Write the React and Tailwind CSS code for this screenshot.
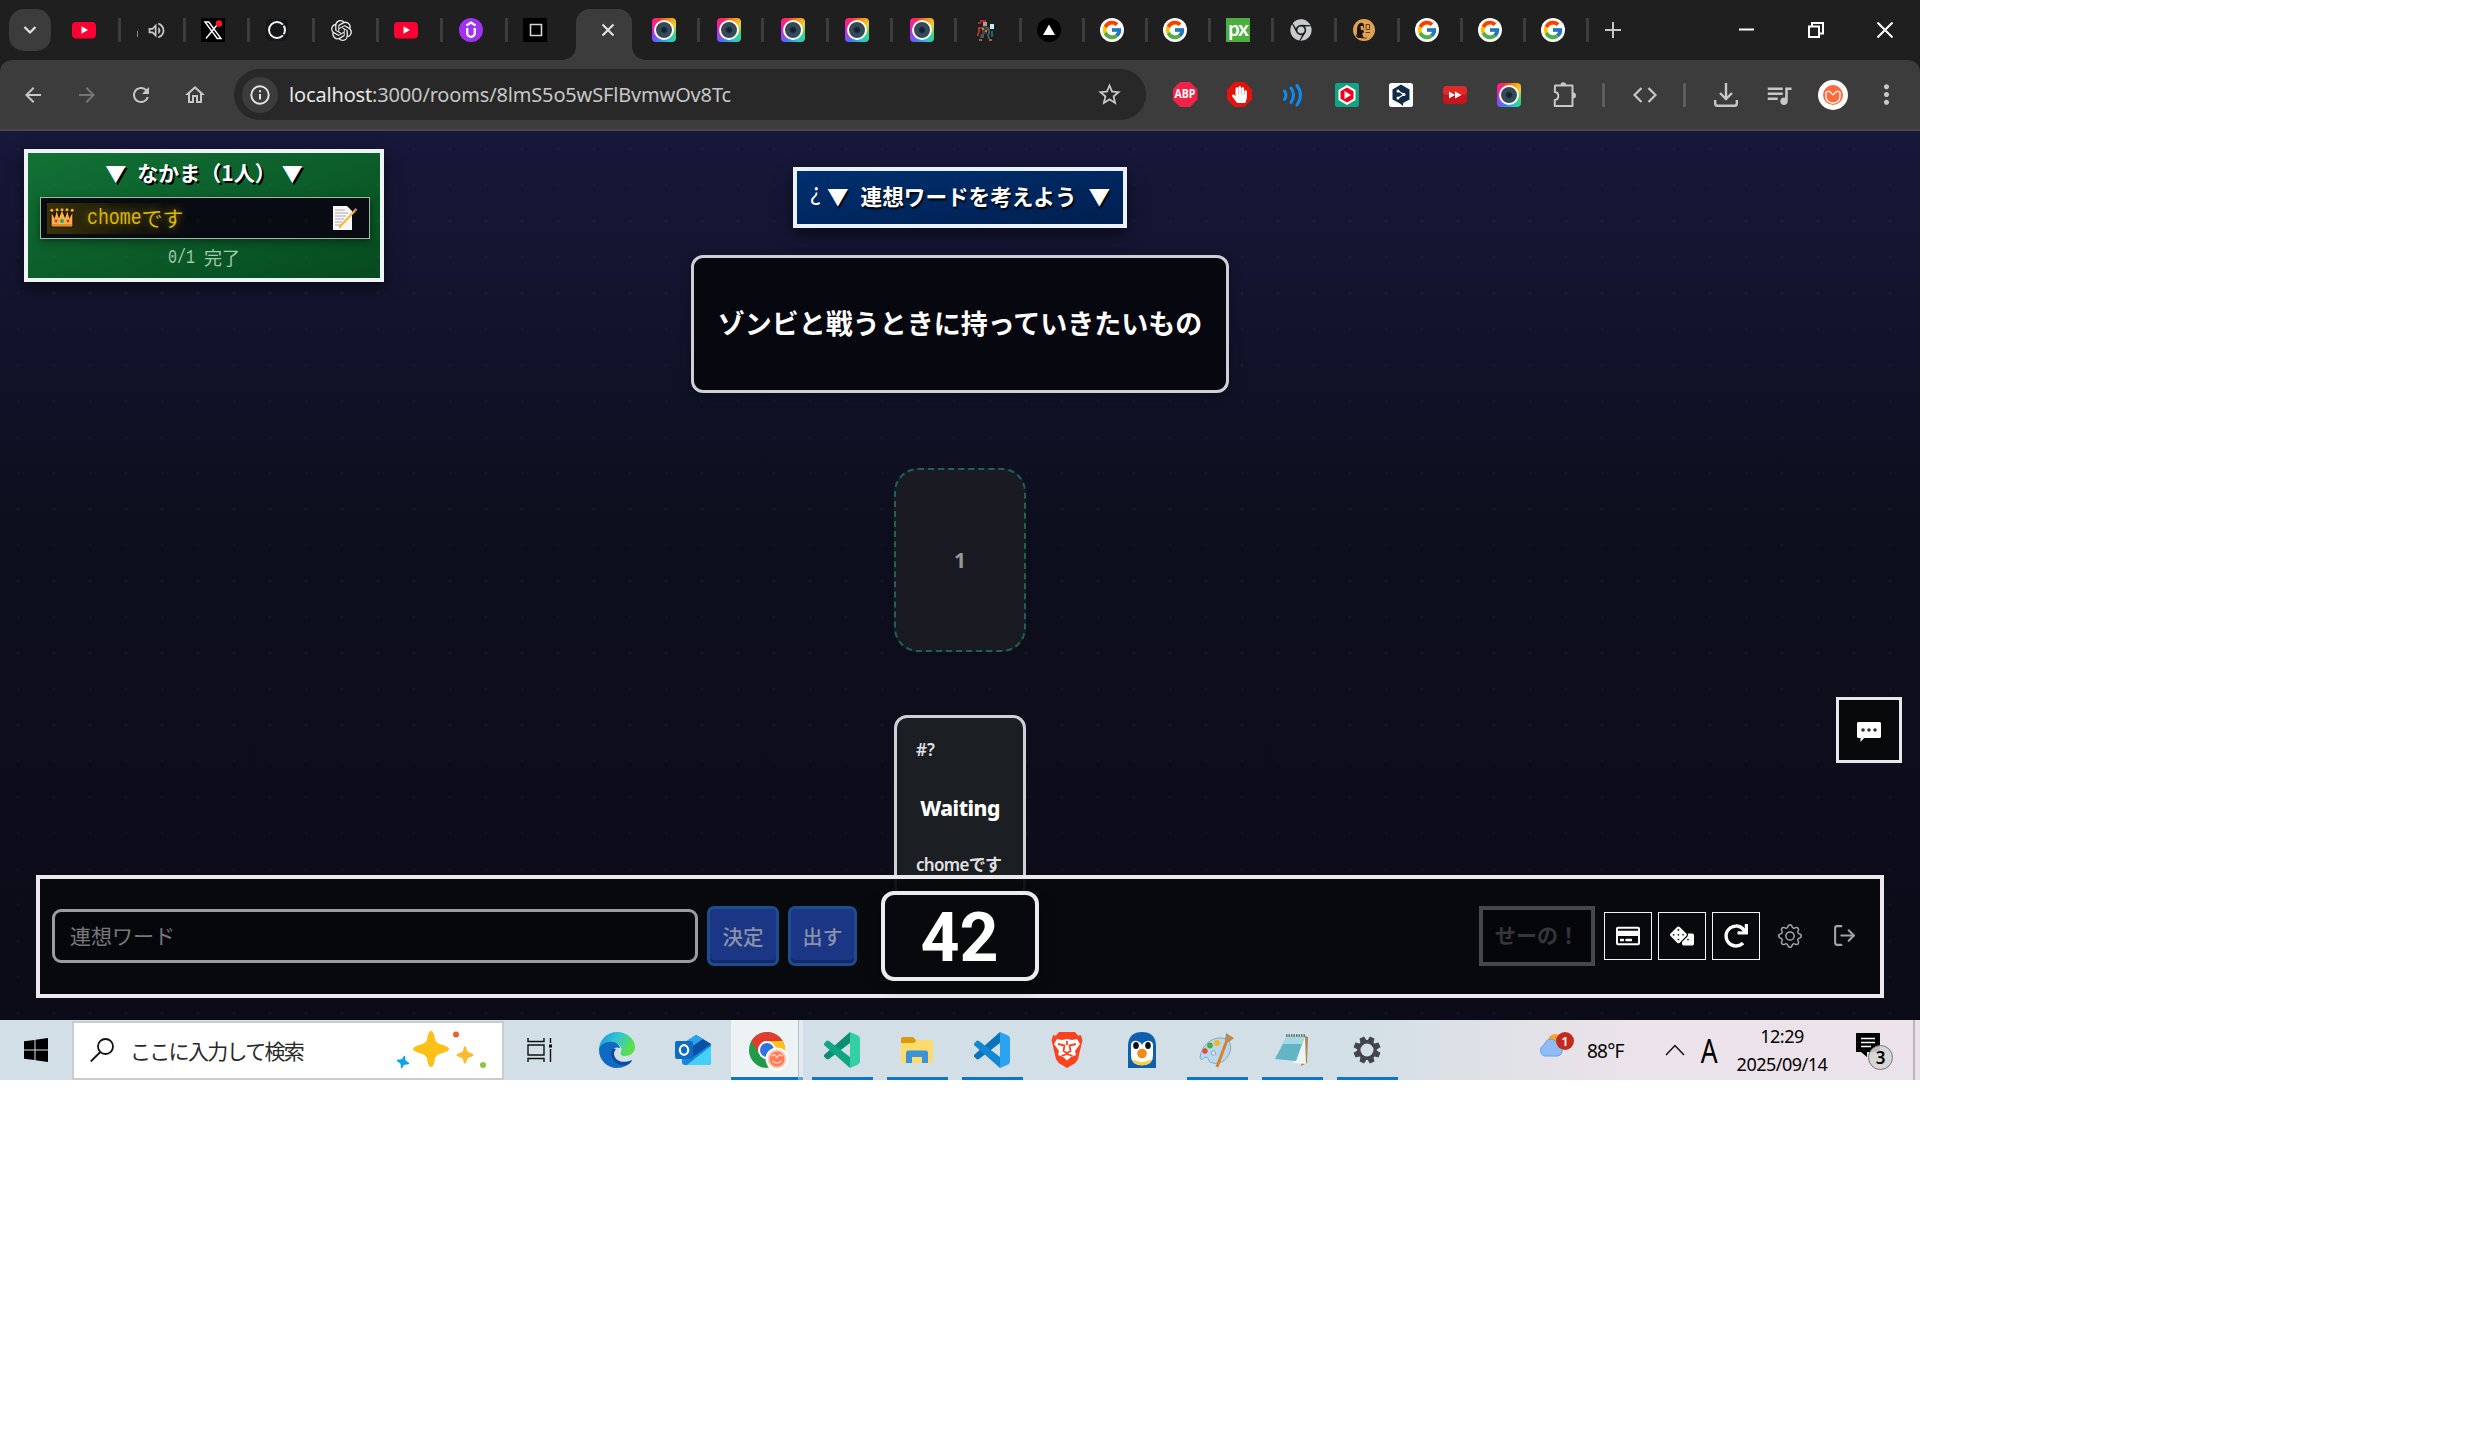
import React from "react";
import { FcGoogle } from "react-icons/fc";
import { SiOpenai } from "react-icons/si";
import { FaRedo, FaDice, FaRegCreditCard, FaHandPaper, FaChrome } from "react-icons/fa";
import { FiLogOut } from "react-icons/fi";
import { BsGear } from "react-icons/bs";
import {
  MdArrowBack,
  MdArrowForward,
  MdRefresh,
  MdOutlineHome,
  MdStarBorder,
  MdQueueMusic,
  MdMoreVert,
  MdOutlineVolumeUp,
} from "react-icons/md";

const YouTube = () => (
  <svg viewBox="0 0 24 24" className="size-6">
    <rect y="4" width="24" height="16.500" rx="4" fill="#ff0033" />
    <path d="M9.500 8.200v7.600l6.500-3.800z" fill="#fff" />
  </svg>
);
const XIcon = () => (
  <svg viewBox="0 0 24 24" className="size-6">
    <path d="M0 0h24v24H0z" fill="#000" />
    <path d="M4 4h3.800L20 20.500h-3.800zM18 4.500 5 20.500" fill="none" stroke="#fff" strokeWidth="1.400" />
    <circle cx="18" cy="5.500" r="3.200" fill="#ff1a1a" />
  </svg>
);
const Ring = () => (
  <svg viewBox="0 0 24 24" className="size-6">
    <rect x="1" y="1" width="22" height="22" rx="5" fill="#151718" />
    <circle cx="12" cy="12" r="8" fill="none" stroke="#f4f4f4" strokeWidth="2" />
    <path d="m16.500 8.500 4-3M16.500 15.500l4 3" stroke="#151718" strokeWidth="1.300" />
  </svg>
);
const Udemy = () => (
  <svg viewBox="0 0 24 24" className="size-6">
    <circle cx="12" cy="12" r="12" fill="#a033f0" />
    <path d="M7.500 7.500 12 4.600l4.500 2.900M8.200 10v5a3.800 3.800 0 0 0 7.600 0v-5" fill="none" stroke="#fff" strokeWidth="2.300" />
  </svg>
);
const Square = () => (
  <svg viewBox="0 0 24 24" className="size-6">
    <path d="M0 0h24v24H0z" fill="#000" />
    <path d="M7.500 6.500h11v11h-11z" fill="none" stroke="#d4d4d4" strokeWidth="1.600" />
  </svg>
);
const Camera = () => (
  <span className="flex size-6 items-center justify-center rounded-[4px] bg-[conic-gradient(from_20deg,#ff8a00,#e6d33c,#3fd37c,#27c8c8,#3b82f6,#a03cf0,#f01fb0,#ff2a4d,#ff8a00)]">
    <span className="flex size-5 items-center justify-center rounded-full border-2 border-white bg-[#3a4854]">
      <span className="size-2 rounded-full border border-[#20506e] bg-[#14232f]" />
    </span>
  </span>
);
const Knight = () => (
  <svg viewBox="0 0 24 24" className="size-6">
    <path d="M6 2h6v2H6zM4 4h3v2H4z" fill="#b3282d" />
    <path d="M9 4h4v4H9z" fill="#9aa3a8" />
    <path d="M4 9h4v2H6v4H4zM12 9h3v3h-3zM3 15h2v3H3z" fill="#a3372e" />
    <path d="M8 8h5v8H8z" fill="#4f3d33" />
    <path d="M8 10h2v2H8zM11 12h2v2h-2z" fill="#a58a5c" />
    <path d="M16 6h4v5h-4z" fill="#b9f2ee" />
    <path d="M14 11h2v5h-2zM17 13h2v6h-2z" fill="#2b6470" />
    <path d="M7 16h3v4H6zM13 16h2l1 5h-2z" fill="#4f565c" />
    <path d="M5 21h3v2H5zM15 21h3v2h-3z" fill="#93643c" />
  </svg>
);
const Triangle = () => (
  <svg viewBox="0 0 24 24" className="size-6">
    <circle cx="12" cy="12" r="12" fill="#000" />
    <path d="m12 6.500 6 10.500H6z" fill="#fff" />
  </svg>
);
const Google = () => (
  <span className="flex size-6 items-center justify-center rounded-full bg-white">
    <FcGoogle className="size-[22px]" />
  </span>
);
const Px = () => (
  <span className="flex size-6 items-center justify-center bg-[#4caf3f] pb-1 font-['Lato'] text-[20px] font-bold leading-none tracking-[-1px] text-white">
    px
  </span>
);
const Book = () => (
  <svg viewBox="0 0 24 24" className="size-6">
    <circle cx="12" cy="12" r="11" fill="#e0a153" />
    <path d="M4 18c2-3 0-7 2-11 2-3 6-3 6 1l-1 3 1 3-2 2 2 4H6z" fill="#1c1612" />
    <path d="M8.500 8h2.500v4H9z" fill="#e0a153" />
    <path d="M14 6.500h3.500v5H14zM13.500 14.500H18M9 20h6" fill="none" stroke="#5a3c1c" />
  </svg>
);

const tabsLeft = [
  YouTube,
  () => (
    <span className="ml-[6px] flex h-6 items-center gap-[8px] text-[#c7c7c7]">
      <span className="h-1.5 w-px translate-y-1 bg-[#8a8a8a]" />
      <MdOutlineVolumeUp className="size-[21px]" />
    </span>
  ),
  XIcon,
  Ring,
  () => <SiOpenai className="size-[21px] text-[#e6e6e6]" />,
  YouTube,
  Udemy,
];
const tabsMid = [Camera, Camera, Camera, Camera, Camera, Knight];
const tabsRight = [
  Triangle,
  Google,
  Google,
  Px,
  () => <FaChrome className="size-[22px] text-[#c9cccf]" />,
  Book,
  Google,
  Google,
  Google,
];

function TabStrip() {
  return (
    <div className="flex h-[60px] items-start bg-[#1f1f1f]">
      <div className="ml-[9px] mt-[9px] flex h-[42px] w-[42px] items-center justify-center rounded-[15px] bg-[#3c3c3c]">
        <svg viewBox="0 0 14 14" className="size-[14px]">
          <path d="m1.500 4 5.500 5.500L12.500 4" fill="none" stroke="#e3e3e3" strokeWidth="2.200" />
        </svg>
      </div>
      <div className="ml-[6px] flex h-[60px] items-center">
        {tabsLeft.map((Icon, i) => (
          <div key={i} className="flex h-6 w-[64.4px] items-center justify-center border-r-[3px] border-[#3c3c3c] pr-[7px]">
            <Icon />
          </div>
        ))}
        <div className="flex h-6 w-[55px] items-center justify-center">
          <Square />
        </div>
      </div>
      <div className="mt-[9px] flex h-[51px] items-end">
        <div className="size-[13px] bg-[radial-gradient(circle_at_0_0,#1f1f1f_12.500px,#3c3c3c_13px)]" />
        <div className="flex h-[51px] w-[56px] items-center justify-center rounded-t-[14px] bg-[#3c3c3c] pb-[9px] pl-[8px]">
          <svg viewBox="0 0 14 14" className="size-[14px]">
            <path d="m1.500 1.500 11 11m0-11-11 11" stroke="#e6e6e6" strokeWidth="2" />
          </svg>
        </div>
        <div className="size-[13px] bg-[radial-gradient(circle_at_100%_0,#1f1f1f_12.500px,#3c3c3c_13px)]" />
      </div>
      <div className="-ml-[9px] flex h-[60px] items-center">
        {tabsMid.map((Icon, i) => (
          <div key={i} className="flex h-6 w-[64.3px] items-center justify-center border-r-[3px] border-[#3c3c3c] pr-[4px]">
            <Icon />
          </div>
        ))}
        {tabsRight.map((Icon, i) => (
          <div key={i} className="flex h-6 w-[63px] items-center justify-center border-r-[3px] border-[#3c3c3c] pr-[5px]">
            <Icon />
          </div>
        ))}
        <svg viewBox="0 0 16 16" className="ml-[16px] size-4">
          <path d="M8 0v16M0 8h16" stroke="#c7c7c7" strokeWidth="2" />
        </svg>
      </div>
      <div className="ml-auto flex h-[60px] items-center gap-[53px] pr-[27px]">
        <svg viewBox="0 0 16 16" className="size-4">
          <path d="M0 7.500h15" stroke="#fff" strokeWidth="2" />
        </svg>
        <svg viewBox="0 0 16 16" className="size-4">
          <path d="M1 4.500h10V15H1zM4 4.500V1h11v10.500h-4" fill="none" stroke="#fff" strokeWidth="2" />
        </svg>
        <svg viewBox="0 0 16 16" className="size-4">
          <path d="m.5.5 15 15m0-15-15 15" stroke="#fff" strokeWidth="2" />
        </svg>
      </div>
    </div>
  );
}

const OCTAGON = "M7.500 0h10L25 7.500v10L17.500 25h-10L0 17.500v-10z";
const extensions = [
  () => (
    <span className="flex size-[25px] items-center justify-center bg-[#f0224a] font-['Open_Sans'] text-[10.500px] font-bold text-white [clip-path:polygon(30%_0,70%_0,100%_30%,100%_70%,70%_100%,30%_100%,0_70%,0_30%)]">
      <span className="inline-block scale-y-[1.15]">ABP</span>
    </span>
  ),
  () => (
    <span className="relative flex size-[25px] items-center justify-center">
      <svg viewBox="0 0 25 25" className="absolute inset-0">
        <path d={OCTAGON} fill="#e4120c" />
      </svg>
      <FaHandPaper className="relative size-[17px] text-white" />
    </span>
  ),
  () => (
    <svg viewBox="0 0 24 24" className="size-6">
      <path d="M3.500 8q3 4 0 8.500M10 5q5 7 0 14.500M16 2.500q7 9.500 0 19.500" fill="none" stroke="#0d8cf0" strokeWidth="3" strokeLinecap="round" />
    </svg>
  ),
  () => (
    <svg viewBox="0 0 24 24" className="size-6">
      <rect width="24" height="24" rx="2" fill="#12a583" />
      <path d="m12 2 8.500 5v10L12 22l-8.500-5V7z" fill="#fff" />
      <path d="m12 4.500 6.500 3.800v7.500L12 19.600l-6.500-3.800V8.300z" fill="#f4001f" />
      <path d="M9.500 8v8l6.500-4z" fill="#fff" />
    </svg>
  ),
  () => (
    <svg viewBox="0 0 24 24" className="size-6">
      <rect width="24" height="24" rx="2.500" fill="#fff" />
      <path d="m12 1.500 8.500 5v10L14 20v3l-3-2.500-7.500-4v-10z" fill="#0f2b46" />
      <path d="m9 8 6 3.500L9 15" fill="none" stroke="#fff" strokeWidth="1.300" />
      <circle cx="9" cy="8" r="1.500" fill="#fff" />
      <circle cx="15" cy="11.500" r="1.500" fill="#fff" />
      <circle cx="9" cy="15" r="1.500" fill="#fff" />
    </svg>
  ),
  () => (
    <svg viewBox="0 0 24 24" className="size-6">
      <rect y="3" width="24" height="18" rx="4" fill="#c4161c" />
      <rect y="3" width="24" height="9" rx="4" fill="#e02a2a" />
      <path d="M6 8.500v7l6-3.500zm6 0v7l6.500-3.500z" fill="#fff" />
    </svg>
  ),
  Camera,
  () => (
    <svg viewBox="0 0 26 26" className="ml-[3px] size-[26px]">
      <path
        d="M3 3.500h17.500V24H2.800v-6q3.500-.5 3.500-4T2.800 10z"
        fill="none"
        stroke="#c7c7c7"
        strokeWidth="2"
        strokeLinejoin="round"
      />
      <path d="M8.500 3a2.800 2.800 0 0 1 5.600 0zM21 10.500a3 3 0 0 1 0 6z" fill="#c7c7c7" />
    </svg>
  ),
];

const Avatar = ({ className }) => (
  <svg viewBox="0 0 30 30" className={className}>
    <circle cx="15" cy="15" r="15" fill="#fff" />
    <circle cx="15" cy="15" r="10" fill="#ff6b3d" />
    <path d="M8 12v5a7 6 0 0 0 14 0v-5" fill="none" stroke="#fff" strokeWidth="1.300" />
    <path d="M8 12.500q3-3 6 1.500 1 1.500 2 0 3-4.500 6-1.500" fill="none" stroke="#fff" strokeWidth="1.300" />
  </svg>
);

function Toolbar() {
  return (
    <div className="bg-[#1f1f1f]">
      <div className="flex h-[71px] items-center rounded-t-[12px] border-b-2 border-[#4b4b4b] bg-[#3c3c3c] text-[#c7c7c7]">
        <div className="ml-[21px] flex gap-[30px]">
          <MdArrowBack className="size-6" />
          <MdArrowForward className="size-6 text-[#757575]" />
          <MdRefresh className="size-6" />
          <MdOutlineHome className="size-6" />
        </div>
        <div className="ml-[27px] flex h-[51px] w-[912px] items-center rounded-full bg-[#282828] pl-[8px] pr-[23px]">
          <span className="flex size-9 items-center justify-center rounded-full bg-[#3c3c3c]">
            <svg viewBox="0 0 20 20" className="size-5">
              <circle cx="10" cy="10" r="8.700" fill="none" stroke="#e3e3e3" strokeWidth="2" />
              <path d="M10 9v5.500M10 5.300v2" stroke="#e3e3e3" strokeWidth="2" />
            </svg>
          </span>
          <span className="ml-[11px] font-['Noto_Sans'] text-[20px] tracking-[-0.160px] text-[#c7c7c7]">
            <span className="text-[#e6e6e6]">localhost</span>:3000/rooms/8lmS5o5wSFlBvmwOv8Tc
          </span>
          <MdStarBorder className="ml-auto size-[27px]" />
        </div>
        <div className="ml-[12px] flex">
          {extensions.map((Icon, i) => (
            <div key={i} className="flex h-8 w-[54px] items-center justify-center">
              <Icon />
            </div>
          ))}
        </div>
        <div className="ml-[12px] h-6 w-[3px] bg-[#5c5c5c]" />
        <svg viewBox="0 0 24 16" className="ml-[28px] h-4 w-6">
          <path d="M8.500 1 1.500 8l7 7m7-14 7 7-7 7" fill="none" stroke="#c7c7c7" strokeWidth="2.200" />
        </svg>
        <div className="ml-[26px] h-6 w-[3px] bg-[#5c5c5c]" />
        <svg viewBox="0 0 24 24" className="ml-[28px] size-6">
          <path d="M12 0v15M6 10l6 6 6-6M1.200 17v3.500q0 2.300 2.300 2.300h17q2.300 0 2.300-2.300V17" fill="none" stroke="#c7c7c7" strokeWidth="2.400" />
        </svg>
        <MdQueueMusic className="ml-[26px] size-[30px]" />
        <Avatar className="ml-[24px] size-[30px]" />
        <MdMoreVert className="ml-[23px] size-[31px]" />
      </div>
    </div>
  );
}

const Crown = () => (
  <svg viewBox="0 0 24 20" className="h-5 w-6">
    <path d="M1 2.500 4.500 9 6.500 1l2.500 7.500L12 1l3 7.500L17.500 1l2 8L23 2.500V19H1z" fill="#fcb040" stroke="#1b1205" strokeWidth="1.200" />
    <g fill="#fcb040">
      <circle cx="1.800" cy="2.200" r="1.500" />
      <circle cx="7" cy="1.800" r="1.500" />
      <circle cx="12" cy="1.800" r="1.500" />
      <circle cx="17" cy="1.800" r="1.500" />
      <circle cx="22.200" cy="2.200" r="1.500" />
    </g>
    <path d="M2 17h20" stroke="#e08a20" strokeWidth="1.800" />
    <circle cx="6" cy="13" r="1.400" fill="#d0285a" />
    <circle cx="12" cy="13" r="1.900" fill="#16a085" />
    <circle cx="18" cy="13" r="1.400" fill="#d0285a" />
  </svg>
);
const Memo = () => (
  <svg viewBox="0 0 26 26" className="size-[26px]">
    <path d="M1 1h14l5 5v19H1z" fill="#f7f7f7" />
    <path d="M3 5h10M3 8h13M3 11h11M3 14h9M3 17h7M3 20h6" stroke="#a9a9ad" />
    <path d="M23 5.500 9 20.500l-1.800 2.300" fill="none" stroke="#f5b942" strokeWidth="2.200" />
    <path d="m24.500 3.800-1.500 1.700" stroke="#e0758a" strokeWidth="2.600" />
  </svg>
);

function MemberPanel() {
  return (
    <div className="ml-[24px] mt-[18px] flex h-[133px] w-[360px] shrink-0 flex-col items-center border-4 border-[#eef3f5] bg-linear-to-br from-[#127236] to-[#064a1e] font-['Noto_Sans_CJK_JP',sans-serif] shadow-[0_6px_14px_rgba(0,0,0,.5)]">
      <div className="mt-[4px] flex h-[30px] text-[21px] font-bold leading-[30px] text-white [text-shadow:2px_2px_0_#000]">
        <span>▼</span>
        <span className="ml-[11px] mr-[6px]">なかま（1人）</span>
        <span>▼</span>
      </div>
      <div className="ml-[2px] mt-[10px] flex h-[42px] w-[330px] items-center border border-[#9fb8a8] bg-[#080b11] pl-[6px] pr-[11px] shadow-[0_3px_8px_rgba(0,0,0,.4)]">
        <div className="flex h-[31px] items-center bg-linear-to-r from-[#3a3308] via-[#1d1a0b] to-transparent pl-[3px] pr-[6px]">
          <Crown />
          <span className="ml-[13px] flex h-[28px] items-center whitespace-nowrap pb-[2px] text-[21px] leading-[28px] text-[#dcb808] [text-shadow:0_0_8px_rgba(232,192,8,.5)]">
            <span className="mt-[2px] inline-block scale-y-[1.25] font-['Liberation_Mono'] text-[18.200px]">chome</span>です
          </span>
        </div>
        <span className="ml-auto">
          <Memo />
        </span>
      </div>
      <div className="mt-[5px] flex h-[26px] items-center gap-[9px] text-[18px] leading-[26px] text-[#a4c8b0]">
        <span className="mt-[3px] inline-block scale-y-[1.4] font-['Liberation_Mono'] text-[15px]">0/1</span>
        完了
      </div>
    </div>
  );
}

const squareBtn = "flex size-12 items-center justify-center border-[1.5px] border-[#f2f2f2] text-white";

function BottomBar() {
  return (
    <div className="absolute left-[36px] top-[744px] flex h-[123px] w-[1848px] items-center border-4 border-[#ebe9ee] bg-[#08090c]/95 pb-[2px] font-['Noto_Sans_CJK_JP',sans-serif]">
      <div className="ml-[12px] flex h-[54px] w-[646px] items-center rounded-[9px] border-[3px] border-[#9c9ca0] bg-[#06070b] pl-[15px] pt-[1px] text-[21px] text-[#77787c]">
        連想ワード
      </div>
      <button className="ml-[9px] flex h-[60px] w-[72px] items-center justify-center rounded-[7px] border-[3px] border-[#1d4c8f] bg-[#1a3685] pt-[2px] text-[20.500px] font-medium text-[#8c93a8] shadow-[inset_0_-3px_0_#12296a]">
        決定
      </button>
      <button className="ml-[9px] flex h-[60px] w-[69px] items-center justify-center rounded-[7px] border-[3px] border-[#1d4c8f] bg-[#1a3685] pt-[2px] text-[20px] font-medium text-[#8c93a8] shadow-[inset_0_-3px_0_#12296a]">
        出す
      </button>
      <div className="ml-[24px] flex h-[90px] w-[158px] items-center justify-center rounded-[13px] border-4 border-[#ececee] bg-[#08090c] pr-[1px] pt-[5px] font-['Roboto'] text-[68px] font-bold leading-none text-white shadow-[0_6px_12px_rgba(0,0,0,.4)]">
        42
      </div>
      <div className="ml-auto mr-[12px] flex items-center">
        <div className="mr-[9px] flex h-[60px] w-[116px] items-center justify-center border-4 border-[#47474b] bg-[#05060a] pb-[2px] text-[21px] font-bold text-[#35363a]">
          せーの！
        </div>
        <div className="flex gap-[6px]">
          <div className={squareBtn}>
            <FaRegCreditCard className="size-6" />
          </div>
          <div className={squareBtn}>
            <FaDice className="size-6" />
          </div>
          <div className={squareBtn}>
            <FaRedo className="size-6" />
          </div>
        </div>
        <div className="ml-[6px] flex size-12 items-center justify-center text-[#a4a4a8]">
          <BsGear className="size-6" />
        </div>
        <div className="ml-[6px] flex size-12 items-center justify-center text-[#a4a4a8]">
          <FiLogOut className="size-[25px]" />
        </div>
      </div>
    </div>
  );
}

function Game() {
  return (
    <div className="relative flex h-[889px] overflow-hidden bg-linear-to-b from-[#17183a] via-[#0d0e1d] via-45% to-[#0c0b18]">
      <div className="absolute inset-0 bg-[radial-gradient(circle,rgba(255,255,255,.025)_1px,transparent_2px)] bg-[size:36px_36px]" />
      <MemberPanel />
      <div className="absolute inset-x-0 top-0 flex flex-col items-center font-['Noto_Sans_CJK_JP',sans-serif]">
        <div className="mt-[36px] flex h-[61px] w-[334px] items-center border-4 border-[#eaf1fa] bg-linear-to-br from-[#003070] to-[#001f50] pb-[3px] pl-[12px] text-[21.600px] text-white shadow-[0_6px_14px_rgba(0,0,0,.5)]">
          <span className="flex w-[12px] justify-center font-['Noto_Sans'] text-[25px] leading-none">
            <span className="inline-block rotate-180 scale-x-90">?</span>
          </span>
          <span className="ml-[6px] whitespace-nowrap font-bold leading-none [text-shadow:1px_2px_2px_#000]">
            ▼<span className="mx-[12px]">連想ワードを考えよう</span>▼
          </span>
        </div>
        <div className="mt-[27px] flex h-[138px] w-[538px] items-center justify-center rounded-[12px] border-[3px] border-[#cdcfd4] bg-[#07080f] pb-[2px] text-[27px] font-bold text-white shadow-[0_4px_12px_rgba(0,0,0,.3)]">
          ゾンビと戦うときに持っていきたいもの
        </div>
        <div className="mt-[75px] flex h-[184px] w-[132px] items-center justify-center rounded-[24px] border-2 border-dashed border-[#1c6356] bg-[#1a1b22] pt-[1px] font-['Noto_Sans'] text-[21px] font-bold text-[#96979b]">
          1
        </div>
        <div className="mt-[63px] flex h-[184px] w-[132px] flex-col rounded-[13px] border-[3px] border-[#cfcfd6] bg-[#1b1e23] px-[19px] font-['Noto_Sans','Noto_Sans_CJK_JP',sans-serif]">
          <span className="mt-[20px] text-[17px] font-semibold leading-[24px] text-[#e0e0e2]">#?</span>
          <span className="mt-[31px] self-center text-[21px] font-extrabold leading-[30px] tracking-[-0.500px] text-white">Waiting</span>
          <span className="mt-[30px] whitespace-nowrap text-[17px] font-semibold leading-[24px] tracking-[-0.700px] text-[#e0e0e2]">chomeです</span>
        </div>
      </div>
      <div className="absolute right-[18px] top-[566px] flex size-[66px] items-center justify-center border-[3px] border-[#e6e8ea] bg-[#07090b]">
        <svg viewBox="0 0 24 20" className="mt-[3px] h-5 w-6">
          <path d="M1 0h22l1 1v14l-1 1H7l-3.500 4v-4H1l-1-1V1z" fill="#fff" />
          <circle cx="6" cy="8" r="1.800" fill="#333" />
          <circle cx="12" cy="8" r="1.800" fill="#333" />
          <circle cx="18" cy="8" r="1.800" fill="#333" />
        </svg>
      </div>
      <BottomBar />
    </div>
  );
}

const Edge = () => (
  <svg viewBox="0 0 36 36" className="size-9">
    <defs>
      <linearGradient id="edgeTop" x1="0" x2="1" y1="0" y2=".4">
        <stop offset="0" stopColor="#1c8fe0" />
        <stop offset=".5" stopColor="#32c2d8" />
        <stop offset="1" stopColor="#5be04a" />
      </linearGradient>
    </defs>
    <path d="M0 18C0 8 8 0 18 0s18 7 18 15c0 6-5 9-10 9-4 0-5-2-4-4 2-5-2-9-7-9-8 0-13 6-15 7z" fill="url(#edgeTop)" />
    <path d="M0 18c1-6 8-9 13-8 4 0 8 3 8 6-7-3-10 6-6 11 4 6 13 5 18 1-3 5-9 8-15 8C8 36 0 28 0 18z" fill="#0f6ac4" />
    <path d="M13 17c-3 7 2 18 15 16 3-1 5-4 5-5-6 3-17 3-18-6 0-2 1-4 2-5z" fill="#0c4a9a" />
  </svg>
);
const Outlook = () => (
  <svg viewBox="0 0 36 36" className="size-9">
    <path d="M7 12 21 3l15 9v18q0 3-3 3H10q-3 0-3-3z" fill="#1a86d9" />
    <path d="M21 3 36 12 18 25l-9-6z" fill="#0a4fa6" />
    <path d="m21 3 7 4-16 11-5-3v-3z" fill="#2ba0ee" />
    <path d="M36 14v16q0 3-3 3H12z" fill="#45d0fa" />
    <rect y="9" width="18" height="18" rx="2" fill="#0f6cc4" />
    <ellipse cx="9" cy="18" rx="4.200" ry="4.800" fill="none" stroke="#fff" strokeWidth="2.200" />
  </svg>
);
const Chrome = () => (
  <svg viewBox="0 0 40 40" className="size-10">
    <circle cx="18" cy="19" r="18" fill="#1e9c4a" />
    <path d="M2.500 10A18 18 0 0 1 33.600 10H18l-8 13z" fill="#e33b2e" />
    <path d="M33.600 10A18 18 0 0 1 18 37l8-14-8-13z" fill="#fbc116" />
    <circle cx="18" cy="19" r="9" fill="#fff" />
    <circle cx="18" cy="19" r="7" fill="#2f73e0" />
    <circle cx="28" cy="28" r="11.500" fill="#fff" />
    <circle cx="28" cy="28" r="9.500" fill="#f9c9b9" />
    <circle cx="28" cy="28" r="7.500" fill="#ff7a55" />
    <path d="m22.500 25 3-1.500 2.500 3 2.500-3 3 1.500m-10 5q4.500 4 9 0" fill="none" stroke="#fbd0c2" strokeWidth="1.400" />
  </svg>
);
const Code = ({ dark, mid, light }) => (
  <svg viewBox="0 0 36 36" className="size-9">
    <path d="M26 0v11L5 27l-2 .5-3-3V23z" fill={dark} />
    <path d="M26 36V25L5 9l-2-.5-3 3V13z" fill={mid} />
    <path d="m26 0 8 3.500q2 1 2 3v23q0 2-2 3L26 36z" fill={light} />
  </svg>
);
const Folder = () => (
  <svg viewBox="0 0 36 36" className="size-9">
    <path d="M2 7q0-2 2-2h10l3 3v6H2z" fill="#d99b0c" />
    <path d="M2 11h13l3-3h14q2 0 2 2v19q0 2-2 2H2z" fill="#fddb6a" />
    <path d="M7 31V21q0-2.500 2.500-2.500h17Q29 18.500 29 21v10h-6v-6H13v6z" fill="#3a93d9" />
  </svg>
);
const Brave = () => (
  <svg viewBox="0 0 36 36" className="size-9">
    <path d="M10 0h16l3 3.500 3-.3 1.500 5-1 4-3.500 15-3 4L18 36l-8-4.800-3-4L3.500 12.200l-1-4 1.500-5 3 .3z" fill="#fb4320" />
    <path d="m8 7 5 1 5-1 5 1 5-1 3 5-5 7 1 4-5 2-4 3.500-4-3.500-5-2 1-4-5-7z" fill="#fff" />
    <path d="m9 12 6.500 1.500-1 5.500 3.500 2 3.500-2-1-5.500 6.500-1.500M12.500 24l5.500-2 5.500 2M18 9v4" fill="none" stroke="#fb4320" strokeWidth="1.800" />
  </svg>
);
const Penguin = () => (
  <svg viewBox="0 0 36 36" className="size-9">
    <path d="M4 14C4 4 10 0 18 0s14 4 14 14v22H4z" fill="#0e5fae" />
    <path d="M7 24q0-10 0-12 2-4 6-3 4 1 5 4 1-3 5-4 4-1 6 3 0 2 0 12 0 9-11 9T7 24z" fill="#fff" />
    <path d="M8 27q10 6 20 0-2 6.500-10 6.500T8 27z" fill="#f8d040" />
    <ellipse cx="12" cy="13.500" rx="2.800" ry="3.500" fill="#111" />
    <ellipse cx="24" cy="13.500" rx="2.800" ry="3.500" fill="#111" />
    <circle cx="18" cy="21.500" r="4.800" fill="#f08a18" />
  </svg>
);
const Paint = () => (
  <svg viewBox="0 0 36 36" className="size-9">
    <path d="M1 26C2 14 12 5 23 6c9 1 11 10 6 18-4 7-12 9-18 6-2-1-1-5-4-5s-3 5-6 1z" fill="#b9d8ee" stroke="#7fa9c9" />
    <circle cx="6" cy="19" r="2.700" fill="#e04a3a" />
    <circle cx="11" cy="13.500" r="2.900" fill="#4cae3c" />
    <circle cx="18" cy="11" r="3" fill="#f2b71c" />
    <circle cx="14.500" cy="21" r="2.200" fill="#dcebf4" stroke="#7fa9c9" />
    <path d="M28 8 18 35" stroke="#dd8226" strokeWidth="3" />
    <path d="m27 1 8 5-5 4-4-1.500z" fill="#b88a5c" />
  </svg>
);
const Notepad = () => (
  <svg viewBox="0 0 36 36" className="size-9">
    <path d="m31 4 3 1-1 26-6 3z" fill="#a98850" />
    <path d="m31 4 1 28-13-1z" fill="#eef3f4" />
    <path d="M13 4h18l-9 25-21-2z" fill="#63b5c6" />
    <path d="M13 4h18l-3 8H8z" fill="#a5d8e2" />
    <path d="M12 3.500h20" stroke="#666" strokeWidth="2.600" strokeDasharray="1.500 1" />
  </svg>
);
const teeth = [22.5, 67.5, 112.5, 157.5, 202.5, 247.5, 292.5, 337.5];
const Gear = () => (
  <svg viewBox="0 0 36 36" className="size-9">
    <g fill="#42464b">
      {teeth.map((a) => (
        <path key={a} d="M15.500 4.500h5l1 6h-7z" transform={`rotate(${a} 18 18)`} />
      ))}
    </g>
    <circle cx="18" cy="18" r="8.200" fill="none" stroke="#42464b" strokeWidth="3.400" />
  </svg>
);

const pinned = [
  { icon: <Code dark="#0a8f72" mid="#12a583" light="#35cfa4" />, open: true },
  { icon: <Folder />, open: true },
  { icon: <Code dark="#0a74ba" mid="#1387d0" light="#2ba3f2" />, open: true },
  { icon: <Brave /> },
  { icon: <Penguin /> },
  { icon: <Paint />, open: true },
  { icon: <Notepad />, open: true },
  { icon: <Gear />, open: true },
];

const SPARK = "M0-18Q3-18 4-9 6-5 12-4 18-2 18 0 18 2 12 4 6 5 4 9 3 18 0 18-3 18-4 9-6 5-12 4-18 2-18 0-18-2-12-4-6-5-4-9-3-18 0-18z";

function Taskbar() {
  return (
    <div className="flex h-[60px] items-center bg-linear-to-r from-[#d2dfe6] from-70% to-[#ebe3e9] to-85% font-['Noto_Sans','Noto_Sans_CJK_JP',sans-serif] text-black">
      <div className="flex w-[72px] justify-center">
        <svg viewBox="0 0 24 24" className="size-6">
          <path d="M0 3.300 10.500 2v9.500H0zM11.500 1.800 24 0v11.500H11.500zM0 12.500h10.500V22L0 20.700zM11.500 12.500H24V24l-12.500-1.800z" />
        </svg>
      </div>
      <div className="flex h-[59px] w-[432px] items-center border-2 border-[#c9cbcd] bg-white pl-[16px] pr-[14px]">
        <svg viewBox="0 0 24 24" className="size-6">
          <circle cx="15.500" cy="8.500" r="7.500" fill="none" stroke="#111" strokeWidth="1.800" />
          <path d="M10.300 14 .8 23.500" stroke="#111" strokeWidth="1.800" />
        </svg>
        <span className="ml-[16px] mt-[1px] whitespace-nowrap font-['Noto_Sans_CJK_JP',sans-serif] text-[21px] tracking-[-1.700px] text-[#2a2a2a]">ここに入力して検索</span>
        <svg viewBox="0 0 92 38" className="ml-auto h-[38px] w-[92px]">
          <path d={SPARK} transform="translate(35 18)" fill="#fcc018" />
          <path d={SPARK} transform="translate(69 24) scale(.48)" fill="#fcbb2c" />
          <path d={SPARK} transform="translate(7 31) rotate(15) scale(.36)" fill="#0ba4e8" />
          <circle cx="60" cy="3.500" r="3" fill="#e8632c" />
          <circle cx="87" cy="34" r="3" fill="#8cc63f" />
        </svg>
      </div>
      <div className="flex w-[71px] justify-center">
        <svg viewBox="0 0 26 24" className="h-6 w-[26px]">
          <path d="M1 0v3.500h16V0M1 7h16v10H1zM1 24v-3.500h16V24M23.500 0v5M23.500 11v13" fill="none" stroke="#111" strokeWidth="1.400" />
          <path d="M22 6.500h3v3h-3z" />
        </svg>
      </div>
      <div className="ml-[4px] flex w-[76px] justify-center">
        <Edge />
      </div>
      <div className="flex w-[75px] justify-center">
        <Outlook />
      </div>
      <div className="flex h-[60px] w-[73px]">
        <div className="ml-[1px] flex h-full w-[67px] items-center justify-center border-b-[3px] border-[#0d76c8] bg-[#edf2f5] pl-[9px] pt-[4px]">
          <Chrome />
        </div>
        <div className="h-full w-[5px] border-b-[3px] border-l border-b-[#5f9fd2] border-l-[#b5c0c8] bg-[#e2eaee]" />
      </div>
      <div className="ml-[2px] flex h-full">
        {pinned.map((p, i) => (
          <div key={i} className="flex w-[75px] flex-col items-center">
            <div className="flex h-[57px] items-center pr-[1px] pt-[3px]">{p.icon}</div>
            {p.open && <div className="h-[3px] w-[61px] bg-[#0d76c8]" />}
          </div>
        ))}
      </div>
      <div className="ml-auto flex h-full items-center">
        <svg viewBox="0 0 38 26" className="mb-[10px] h-[26px] w-[38px]">
          <circle cx="17" cy="9" r="7" fill="#f7a325" />
          <path d="M6 24a6 6 0 0 1 0-11Q9 5 16 8q5 2 4 6 5 1 4 6-1 4-5 4z" fill="#8fbcf5" stroke="#6a9ce8" />
          <circle cx="27" cy="9" r="9" fill="#c42b1c" />
          <text x="27" y="13.500" textAnchor="middle" fontSize="13" fontWeight="600" fill="#fff">
            1
          </text>
        </svg>
        <span className="ml-[11px] mt-[3px] w-[48px] text-[19px] tracking-[-0.800px]">88°F</span>
        <svg viewBox="0 0 20 12" className="ml-[30px] h-3 w-5">
          <path d="m1 11 9-9.500 9 9.500" fill="none" stroke="#111" strokeWidth="1.500" />
        </svg>
        <span className="ml-[14px] mt-[1px] w-[18px] origin-center scale-x-[.8] text-[33px] leading-none">A</span>
        <div className="ml-[12px] flex w-[106px] flex-col items-center whitespace-nowrap text-[18px] leading-[28px] tracking-[-0.500px]">
          <span>12:29</span>
          <span>2025/09/14</span>
        </div>
        <div className="relative ml-[21px] mt-[2px] h-[37px] w-[37px]">
          <svg viewBox="0 0 24 24" className="absolute left-0 top-0 size-6">
            <path d="M0 0h24v19H11v5l-6-5H0z" />
            <path d="M5 5.500h14M5 9.500h14M5 13.500h10" stroke="#fff" strokeWidth="1.300" />
          </svg>
          <span className="absolute bottom-0 right-0 flex size-[25px] items-center justify-center rounded-full border border-[#777] bg-[#d4d4d4]/90 text-[17px] font-semibold leading-none">
            3
          </span>
        </div>
        <div className="ml-[20px] mr-[5px] h-full w-[2px] bg-[#b9b5bb]" />
      </div>
    </div>
  );
}

export default function App() {
  return (
    <div className="h-[1450px] w-[2468px] overflow-hidden bg-white">
      <div className="w-[1920px]">
        <TabStrip />
        <Toolbar />
        <Game />
        <Taskbar />
      </div>
    </div>
  );
}
